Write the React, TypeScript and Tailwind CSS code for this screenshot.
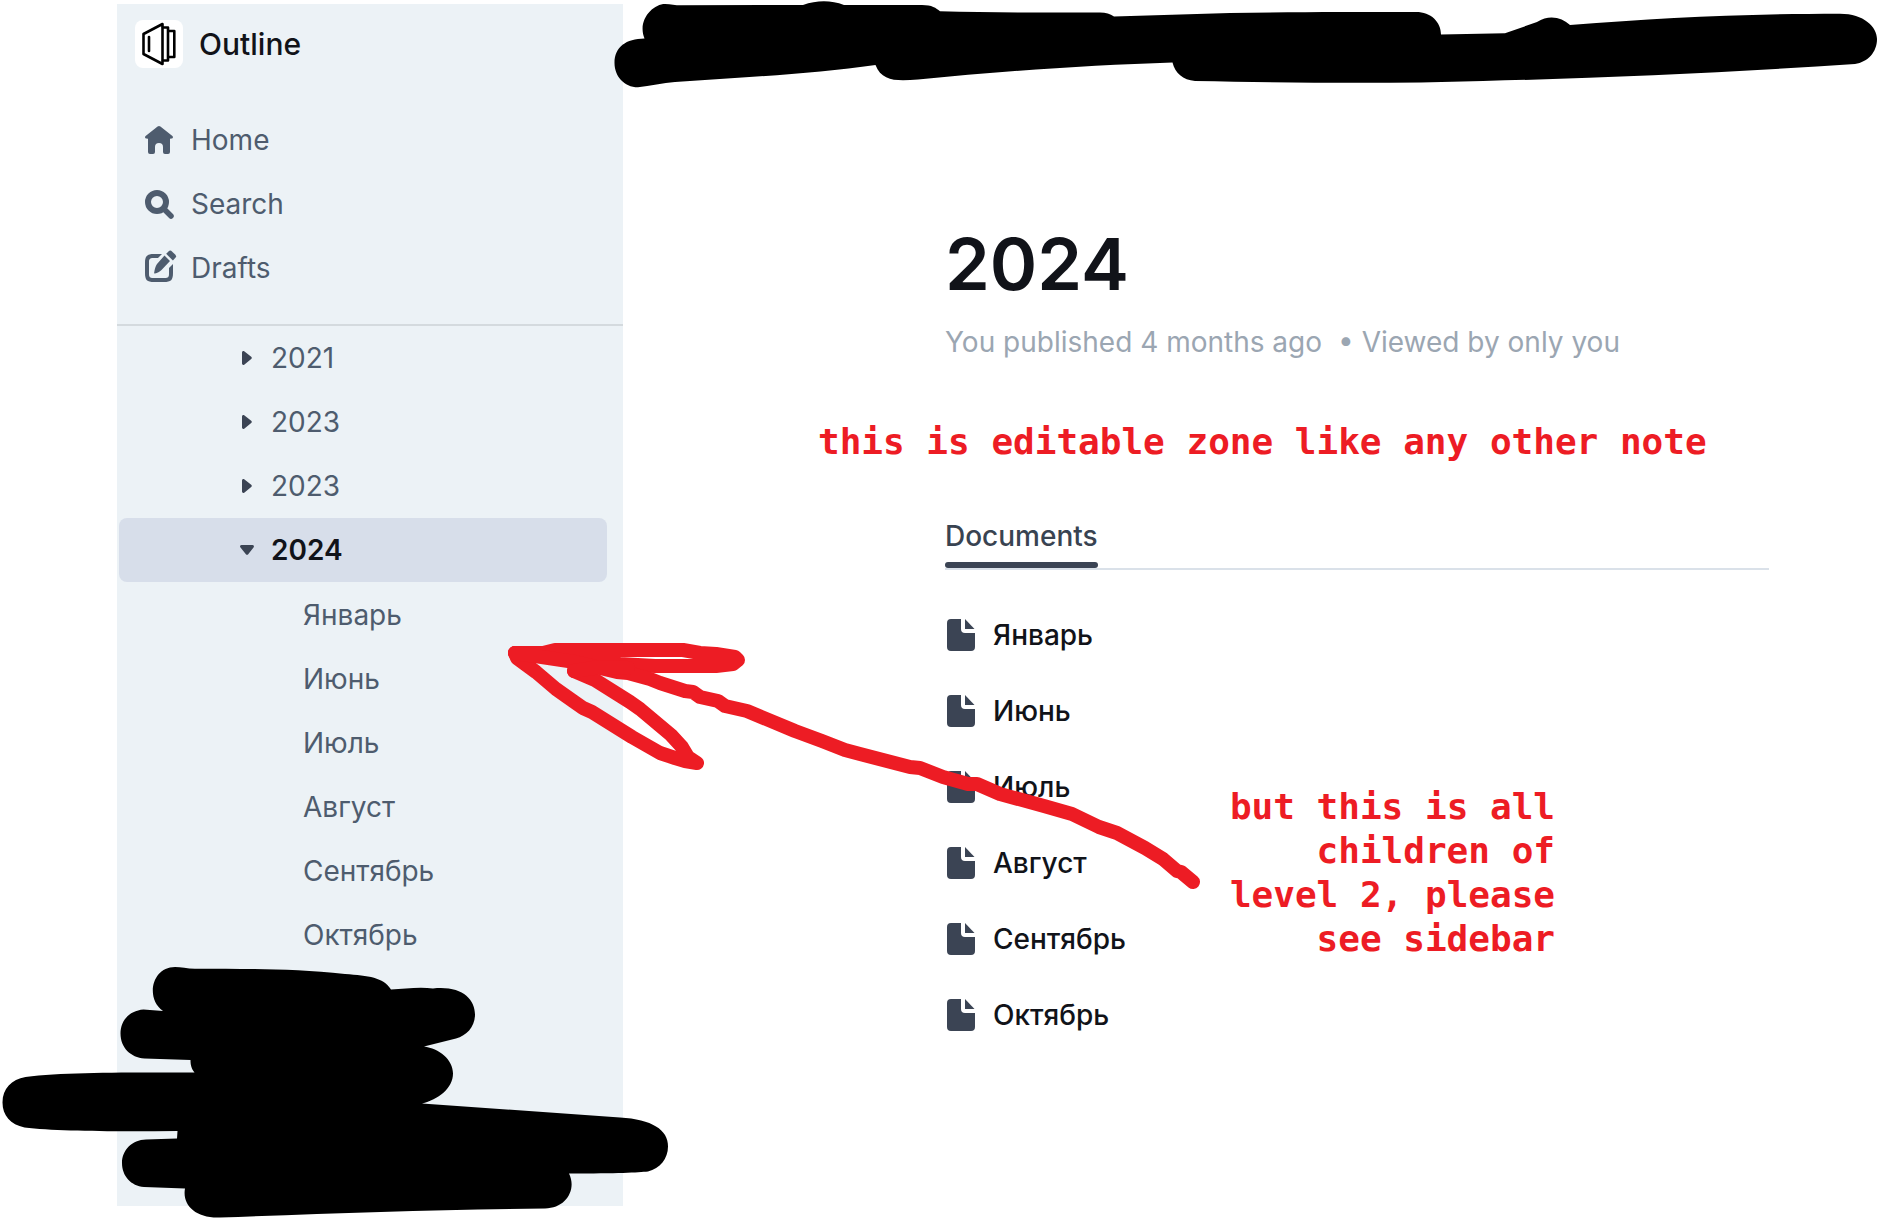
import React from "react";

const years = ["2021", "2023", "2023"];
const months = ["Январь", "Июнь", "Июль", "Август", "Сентябрь", "Октябрь"];

function Logo() {
  return (
    <svg viewBox="0 0 48 48" className="size-12 rounded-lg bg-white" fill="none" stroke="#000" strokeWidth="2.6" strokeLinejoin="round" strokeLinecap="round" aria-hidden="true">
      <path d="M8.5 14 27.5 4v40L8.5 34z" />
      <path d="M14 17v14" />
      <path d="M28 7.5h5v33h-5M33.5 11h5.8v26h-5.8" />
    </svg>
  );
}

function HomeIcon() {
  return (
    <svg viewBox="0 0 48 48" className="size-12" fill="currentColor" aria-hidden="true">
      <path d="M22.6 10.600a2.200 2.200 0 0 1 2.800 0l12 9.300c1 .8.7 2.600-.7 2.600L35 22.800V36a2 2 0 0 1-2 2h-3a2 2 0 0 1-2-2v-5a4 4 0 0 0-8 0v5a2 2 0 0 1-2 2h-3a2 2 0 0 1-2-2V22.800l-1.700-.3c-1.400 0-1.700-1.800-.7-2.600z" />
    </svg>
  );
}

function SearchIcon() {
  return (
    <svg viewBox="0 0 48 48" className="size-12" fill="none" stroke="currentColor" strokeLinecap="round" aria-hidden="true">
      <circle cx="22" cy="22" r="9" strokeWidth="6" />
      <path d="m29.500 29.500 6.500 6.500" strokeWidth="5.500" />
    </svg>
  );
}

function DraftsIcon() {
  return (
    <svg viewBox="0 0 48 48" className="size-12" fill="currentColor" aria-hidden="true">
      <path d="M27 10h-8c-7 0-9 2-9 9v10c0 7 2 9 9 9h10c7 0 9-2 9-9v-9l-4 4v6c0 3-1 4-4 4H18c-3 0-4-1-4-4V18c0-3 1-4 4-4h5z" />
      <path d="m29.500 11.500 5.500 5.500-8.500 9c-2 2-4 3-6.500 3.500-.8 0-1-.4-.8-1C19.800 25 20.500 22 22 20z" />
      <path d="m31.200 9.800 2.300-2.400a2.500 2.500 0 0 1 3.500 0l3.200 3.200a2.500 2.500 0 0 1 0 3.500l-2.300 2.300z" />
    </svg>
  );
}

function Caret({ open }: { open?: boolean }) {
  return (
    <svg viewBox="0 0 24 24" className={open ? "size-6 rotate-90" : "size-6"} fill="#3b4454" aria-hidden="true">
      <path d="M7 6.500c0-1.200 1.200-1.900 2.200-1.200l7 5.500c.8.600.8 1.700 0 2.300l-7 5.600c-1 .7-2.200 0-2.200-1.200z" />
    </svg>
  );
}

function DocIcon() {
  return (
    <svg viewBox="0 0 28 32" className="h-8 w-7" fill="#3b4454" aria-hidden="true">
      <path d="M4 0h10v10a4 4 0 0 0 4 4h10v14a4 4 0 0 1-4 4H4a4 4 0 0 1-4-4V4a4 4 0 0 1 4-4z" />
      <path d="M18 0l9.500 10H18z" />
    </svg>
  );
}

const nav = [
  { label: "Home", icon: <HomeIcon /> },
  { label: "Search", icon: <SearchIcon /> },
  { label: "Drafts", icon: <DraftsIcon /> },
];

function Sidebar() {
  return (
    <aside className="mt-1 mb-3.5 ml-[117px] w-[506px] shrink-0 bg-[#ecf2f6] text-[28px] leading-8 text-[#4e5c6e]">
      <button className="flex items-center gap-4 px-4.5 pt-4 text-[30px] font-medium text-[#111319]">
        <Logo />
        Outline
      </button>
      <nav className="mt-10 border-b-2 border-[#d4dade] pb-6">
        {nav.map((n) => (
          <a key={n.label} href="#" className="flex h-16 items-center gap-2 px-4.5">
            {n.icon}
            {n.label}
          </a>
        ))}
      </nav>
      <ul className="pr-4 pl-0.5">
        {years.map((y, i) => (
          <li key={i}>
            <a href="#" className="flex h-16 items-center gap-3 pl-29">
              <Caret />
              {y}
            </a>
          </li>
        ))}
        <li>
          <a href="#" className="flex h-16 items-center gap-3 rounded-lg bg-[#d7deea] pl-29 font-semibold text-[#111319]">
            <Caret open />
            2024
          </a>
          <ul className="pt-px">
            {months.map((m) => (
              <li key={m}>
                <a href="#" className="flex h-16 items-center pl-46">
                  {m}
                </a>
              </li>
            ))}
          </ul>
        </li>
      </ul>
    </aside>
  );
}

function Document() {
  return (
    <main className="min-w-0 flex-1 pt-[220px] pr-[109px] pl-[322px] text-[28px] leading-8">
      <h1 className="text-[72px] leading-[88px] font-semibold text-[#111319]">2024</h1>
      <p className="mt-4.5 flex gap-4 whitespace-nowrap text-[#9ba6b2]">
        <span>You published 4 months ago</span>
        <span>• Viewed by only you</span>
      </p>
      <div className="mt-[162px] flex border-b-2 border-[#dae1e9]" role="tablist">
        <button role="tab" aria-selected="true" className="font-medium text-[#394351]">
          Documents
          <span className="mt-2.5 block h-1.5 rounded-sm bg-[#3b4454]" />
        </button>
      </div>
      <ul className="mt-[27px]">
        {months.map((m) => (
          <li key={m}>
            <a href="#" className="flex h-19 items-center gap-4.5 pl-0.5 font-medium text-[#111319]">
              <DocIcon />
              {m}
            </a>
          </li>
        ))}
      </ul>
    </main>
  );
}

function Scribbles() {
  return (
    <svg viewBox="0 0 1878 1220" className="pointer-events-none absolute top-0 left-0 h-[1220px] w-[1878px]" aria-hidden="true">
      <path d="M644.500 38.500C637 20 653 4 665 4C671 4.300 675 5.300 681 5.300L803 5C817 0 831 0 844 5L922 5C932 5 936 8 940 11.300C990 12.500 1040 12.800 1100 12.500C1106 12.500 1110 14 1114 16.500L1230 13C1290 12 1350 12 1416 12C1431 12 1441 22 1441 34.500L1505 33.300L1537 22C1550 14 1562 18 1570 25C1660 18 1740 13.700 1840 13.700C1864 13.700 1877 27 1877 39C1877 52 1868 62 1855 64C1735 72 1610 78 1483 81C1393 83.800 1303 83 1195 81C1183 80 1175 73 1172.500 62.500C1092 65 1004 71 918 79.500C898 81 882 82 875.500 65C815 74 745 77 675 82C663 83 650 86 638 87.300C624 87.300 614.500 76 614.500 63C614.500 47 626 38.700 644.500 38.500Z" />
      <path d="M163 1011c-18-13-11-44 12-44 6 0 12 1.700 20 1.700 50 .3 95-.7 150 5.300 24 2 38 3 46 15.500 14-1 30-3 42-1 28-3 42 10 42 26 0 12-8 21-19 24l-32 8c15 2 29 13 29 27 0 15-15 26-31 30l198 14c32 2 48 12 48 29 0 12-8 22-20 25-10 1-30 2-79 2 8 16-3 35-24 35-110 1-220 5-325 9-25 1-38-13-35-29l-41-1.500c-13-1-22-11-22-24 0-13 10-23 24-23.500l31-1 .5-7.500c-60 .5-120 .5-153-3.500-14-3-22-12-22-25 0-14 9-23 23-25.500 40-5 100-4.500 169-4.500-3-4-4-7-4-12.500l-46-1.500c-14-1-24-11-24-25 0-13 9-23 23-24z" />
      <g fill="none" stroke="#ed1c24" strokeWidth="14" strokeLinecap="round" strokeLinejoin="round">
        <path d="M515 653L543 653L555 650L683 650L700 653L716 654L735 657L738 660L733 664L716 666L655 666L620 664L575 660L515 653" />
        <path d="M515 653L517 658L536 672L556 689L573 701L583 708L592 712L632 737L660 753L675 758L685 761L697 763L688 757L682 747L671 735L640 709L630 702L595 680L574 671L600 667" />
        <path d="M515 653L575 662L617 672L628 673L650 679L660 683L685 691L693 692L700 697L718 701L725 706L747 711L795 731L822 741L845 750L860 754L910 767L920 768L943 777L968 784L977 784L1000 794L1044 806L1072 814L1099 827L1117 833L1145 848L1163 859L1177 871L1181 872L1193 882" />
        <path d="M574 671L600 667L628 668" />
      </g>
    </svg>
  );
}

export default function App() {
  return (
    <div className="relative flex min-h-[1220px] overflow-hidden bg-white font-['Inter','Noto_Sans',sans-serif]">
      <Sidebar />
      <Document />
      <Scribbles />
      <p className="absolute top-[420px] left-[818px] font-['DejaVu_Sans_Mono',monospace] text-[36px] leading-[44px] font-bold whitespace-nowrap text-[#ed1c24]">
        this is editable zone like any other note
      </p>
      <p className="absolute top-[785px] left-[1195px] w-[360px] text-right font-['DejaVu_Sans_Mono',monospace] text-[36px] leading-[44px] font-bold text-[#ed1c24]">
        but this is all
        <br />
        children of
        <br />
        level 2, please
        <br />
        see sidebar
      </p>
    </div>
  );
}
